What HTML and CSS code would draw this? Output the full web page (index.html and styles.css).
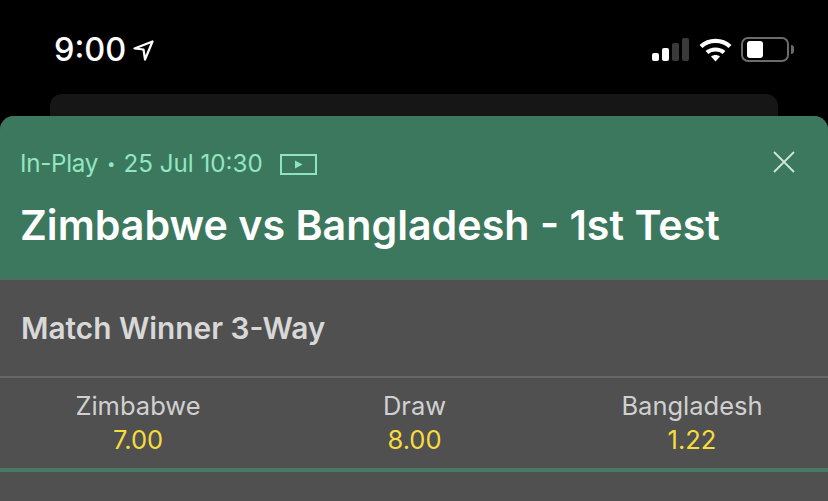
FILE: index.html
```html
<!DOCTYPE html>
<html lang="en">
<head>
<meta charset="utf-8">
<title>Zimbabwe vs Bangladesh</title>
<link rel="stylesheet" href="styles.css">
</head>
<body>
<div class="status">
  <div class="status-left">
    <span class="time">9:00</span>
    <svg class="loc" width="21" height="21" viewBox="0 0 21 21"><path d="M1.500 8.500 19.500 1.500 12 19.500 10.500 9.500Z" fill="none" stroke="#fff" stroke-width="2.200" stroke-linejoin="round"/></svg>
  </div>
  <div class="status-right">
    <svg class="signal" width="38" height="24" viewBox="0 0 38 24">
      <rect x="0" y="15" width="7" height="8" rx="2" fill="#fff"/>
      <rect x="10" y="10" width="7" height="13" rx="2" fill="#fff"/>
      <rect x="20" y="5" width="7" height="18" rx="2" fill="#3a3a3a"/>
      <rect x="30" y="0" width="7" height="23" rx="2" fill="#3a3a3a"/>
    </svg>
    <svg class="wifi" width="33" height="24" viewBox="0 0 33 24">
      <path d="M2 8.500C10 1 23 1 31 8.500" fill="none" stroke="#fff" stroke-width="4.400"/>
      <path d="M8 14.500C12.500 10.500 20.500 10.500 25 14.500" fill="none" stroke="#fff" stroke-width="4.200"/>
      <path d="M12 18.500C14.500 16.500 18.500 16.500 21 18.500L16.500 23.500Z" fill="#fff"/>
    </svg>
    <div class="battery"><div class="level"></div></div>
    <div class="nub"></div>
  </div>
</div>
<div class="back-card"></div>
<main class="sheet">
  <header class="head">
    <div class="meta-row">
      <div class="meta">
        <span class="state">In-Play</span><span class="dot">•</span><span>25 Jul 10:30</span>
        <svg class="tv" width="37" height="21" viewBox="0 0 37 21"><rect x="1" y="1" width="35" height="19" fill="none" stroke="#8fe3bd" stroke-width="2"/><path d="M15 6.500 22.500 10.500 15 14.500Z" fill="#8fe3bd"/></svg>
      </div>
      <svg class="close" width="22" height="22" viewBox="0 0 22 22"><path d="M1 1 21 21M21 1 1 21" stroke="#cfe6dc" stroke-width="1.800" fill="none"/></svg>
    </div>
    <h1 class="title">Zimbabwe vs Bangladesh - 1st Test</h1>
  </header>
  <section class="market">
    <h2 class="market-title">Match Winner 3-Way</h2>
    <div class="odds">
      <div class="odd"><span class="name">Zimbabwe</span><span class="price">7.00</span></div>
      <div class="odd"><span class="name">Draw</span><span class="price">8.00</span></div>
      <div class="odd"><span class="name">Bangladesh</span><span class="price">1.22</span></div>
    </div>
  </section>
</main>
</body>
</html>
```
FILE: styles.css
```css
* { box-sizing: border-box; }
html, body { margin: 0; height: 501px; overflow: hidden; background: #000; }
body { font-family: Inter, "Liberation Sans", sans-serif; }

.status { height: 94px; display: flex; justify-content: space-between; align-items: flex-start; padding: 31px 34px 0 54px; }
.status-left { display: flex; align-items: center; gap: 7px; }
.time { color: #fff; font-size: 32.500px; line-height: 38px; font-weight: 500; }
.status-right { display: flex; align-items: center; padding-top: 6px; }
.signal { margin-right: 9px; }
.wifi { margin-right: 9px; }
.battery { width: 48px; height: 25px; border: 2px solid #6b6b6b; border-radius: 7px; padding: 2px 4px; }
.level { width: 16px; height: 17px; background: #fff; border-radius: 3px; }
.nub { width: 3px; height: 9px; background: #6b6b6b; border-radius: 0 3px 3px 0; margin-left: 2px; }

.back-card { height: 22px; margin: 0 50px; background: #161616; border-radius: 12px 12px 0 0; }

.sheet { background: #505050; border-radius: 14px 14px 0 0; overflow: hidden; }
.head { height: 164px; background: #3b785d; border-bottom: 4px solid #45735f; padding: 35px 33px 0 21px; }
.meta-row { display: flex; justify-content: space-between; align-items: flex-start; height: 26px; }
.meta { display: flex; align-items: center; color: #93e6c1; font-size: 24.200px; line-height: 26px; margin-left: -1px; }
.state { letter-spacing: -0.300px; }
.dot { font-size: 15px; margin: 0 8px 0 9px; }
.tv { margin-left: 17px; }
.title { margin: 25px 0 0 -1px; color: #fff; font-size: 41.200px; line-height: 46px; font-weight: 600; white-space: nowrap; }

.market { height: 221px; }
.market-title { margin: 0; height: 98px; padding: 31px 21px 0; color: #d8d8d8; font-size: 29.800px; line-height: 34px; font-weight: 600; border-bottom: 2px solid #666; }
.odds { height: 94px; display: grid; grid-template-columns: 276px 277px 278px; border-bottom: 4px solid #477a64; padding-top: 13px; }
.odd { display: flex; flex-direction: column; align-items: center; }
.name { color: #d0d0d0; font-size: 25.500px; line-height: 29px; }
.price { color: #f7dc3e; font-size: 25.500px; line-height: 32px; margin-top: 4px; }
```
